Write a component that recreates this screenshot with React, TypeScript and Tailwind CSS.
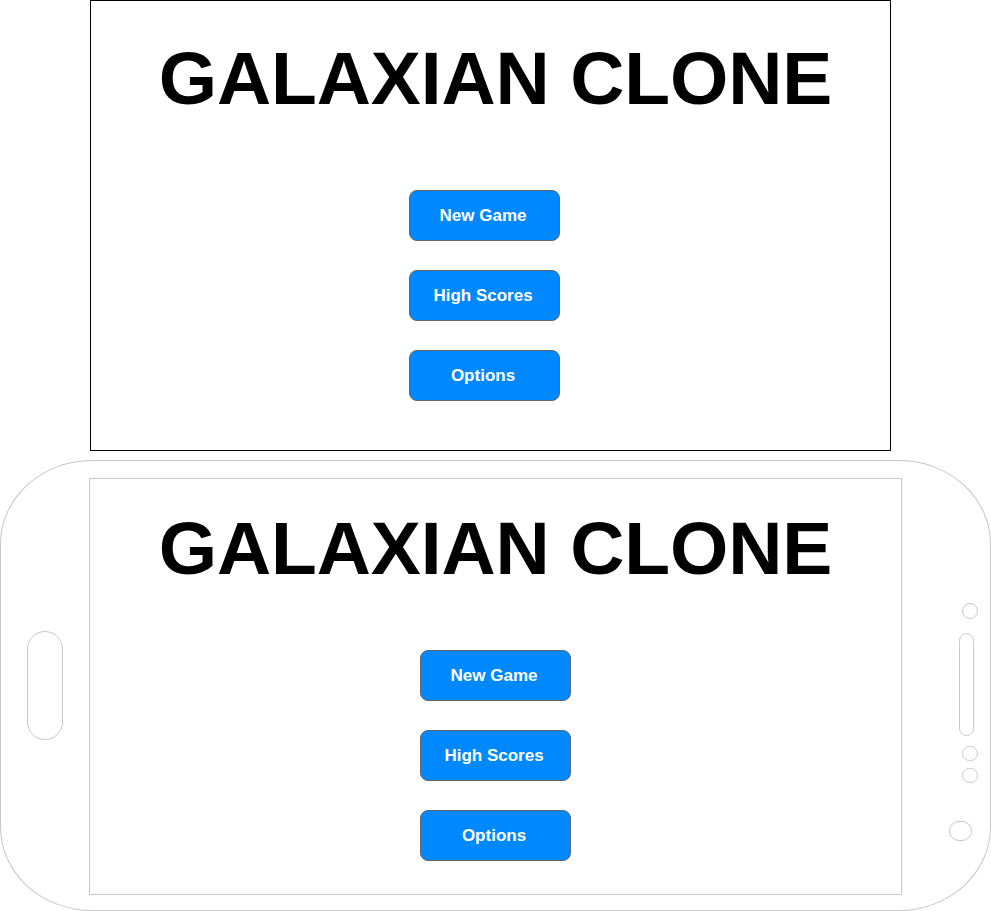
import React from 'react';

const font = { fontFamily: '"Liberation Sans", Arial, sans-serif' };

function MenuButton({ label }: { label: string }) {
  return (
    <button className="flex h-[51px] w-[151px] items-center justify-center rounded-[8px] border border-[#666666] bg-[#0088ff] pr-[3px] text-[17px] font-bold text-white">
      {label}
    </button>
  );
}

function Menu() {
  return (
    <div className="flex flex-col items-center gap-[29px]">
      <MenuButton label="New Game" />
      <MenuButton label="High Scores" />
      <MenuButton label="Options" />
    </div>
  );
}

export default function App() {
  return (
    <div className="min-h-screen w-full bg-white" style={font}>
      {/* browser frame */}
      <div className="ml-[90px] flex h-[451px] w-[801px] flex-col items-center border border-black">
        <h1 className="mt-[40px] pl-[10px] text-[75px] font-bold leading-none tracking-[-0.1px] text-black">GALAXIAN CLONE</h1>
        <div className="mr-[12px] mt-[74px]">
          <Menu />
        </div>
      </div>

      {/* phone frame */}
      <div className="mt-[9px] flex h-[451px] w-[991px] rounded-[92px/84px] border border-[#c8c8c8]">
        <div className="flex w-[88px] items-center justify-center">
          <div className="h-[109px] w-[36px] rounded-full border border-[#c8c8c8]" />
        </div>
        <div className="mt-[17px] flex h-[417px] w-[813px] flex-col items-center border border-[#c8c8c8]">
          <h1 className="mt-[32px] text-[75px] font-bold leading-none tracking-[-0.1px] text-black">GALAXIAN CLONE</h1>
          <div className="mt-[64px]">
            <Menu />
          </div>
        </div>
        <div className="flex flex-col pt-[142px]">
          <div className="ml-[60px] h-[16px] w-[16px] rounded-full border border-[#c8c8c8]" />
          <div className="ml-[57px] mt-[14px] h-[103px] w-[15px] rounded-full border border-[#c8c8c8]" />
          <div className="ml-[60px] mt-[10px] h-[15px] w-[16px] rounded-full border border-[#c8c8c8]" />
          <div className="ml-[60px] mt-[7px] h-[15px] w-[16px] rounded-full border border-[#c8c8c8]" />
          <div className="ml-[47px] mt-[38px] h-[20px] w-[23px] rounded-full border border-[#c8c8c8]" />
        </div>
      </div>
    </div>
  );
}
